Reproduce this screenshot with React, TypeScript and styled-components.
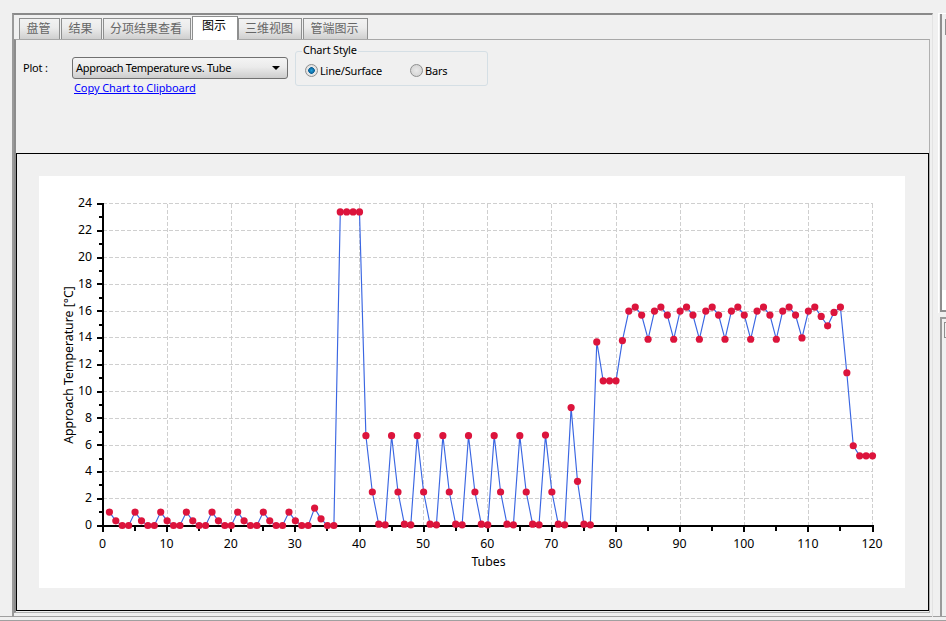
import React, { FC } from "react";
import styled, { createGlobalStyle } from "styled-components";

const GlobalStyle = createGlobalStyle`
  html, body {
    margin: 0;
    padding: 0;
    background: #f0f0f0;
  }
`;

const UI_FONT = `Tahoma, "Noto Sans", "Noto Sans CJK SC", sans-serif`;

const Page = styled.div`
  width: 946px;
  height: 621px;
  overflow: hidden;
  background: #f0f0f0;
  font-family: ${UI_FONT};
  font-size: 11px;
  color: #000;
`;

const Workspace = styled.div`
  display: flex;
  height: 616px;
  padding-left: 12px;
`;

const MainFrame = styled.div`
  width: 919px;
  height: 602px;
  margin-top: 13px;
  border-top: 2px solid #8a8a8a;
  border-left: 2px solid #9a9a9a;
  border-right: 1px solid #e3e3e3;
  display: flex;
  flex-direction: column;
`;

const TabBar = styled.div`
  display: flex;
  align-items: flex-end;
  height: 24px;
  padding-left: 5px;
`;

const Tab = styled.div<{ $active?: boolean; $width: number }>`
  box-sizing: border-box;
  width: ${(p) => p.$width}px;
  height: ${(p) => (p.$active ? 24 : 21)}px;
  margin-right: ${(p) => (p.$active ? 0 : 1)}px;
  margin-bottom: ${(p) => (p.$active ? -1 : 0)}px;
  padding-right: 2px;
  border: 1px solid #8e8f8f;
  border-bottom: none;
  background: ${(p) =>
    p.$active ? "#ffffff" : "linear-gradient(#f2f2f2, #ebebeb 45%, #cfcfcf)"};
  color: ${(p) => (p.$active ? "#000" : "#666")};
  font-size: 12px;
  line-height: ${(p) => (p.$active ? 17 : 19)}px;
  text-align: center;
  position: relative;
  z-index: ${(p) => (p.$active ? 1 : 0)};
`;

const TabPanel = styled.div`
  box-sizing: border-box;
  width: 916px;
  height: 574px;
  border-top: 1px solid #a8a8a8;
  border-left: 2px solid #8c8c8c;
  border-right: 1px solid #b0b0b0;
  border-bottom: 1px solid #b0b0b0;
  display: flex;
  flex-direction: column;
`;

const Toolbar = styled.div`
  display: flex;
  height: 113px;
  box-sizing: border-box;
  padding: 11px 0 0 7px;
`;

const PlotLabel = styled.div`
  width: 49px;
  padding-top: 10px;
  line-height: 13px;
  letter-spacing: -0.2px;
`;

const PlotColumn = styled.div`
  display: flex;
  flex-direction: column;
  width: 216px;
  padding-top: 6px;
`;

const Select = styled.div`
  box-sizing: border-box;
  height: 22px;
  border: 1px solid #707070;
  border-radius: 3px;
  background: linear-gradient(#f4f4f4, #ebebeb 45%, #cdcdcd);
  padding: 0 7px 0 3px;
  display: flex;
  align-items: center;
  justify-content: space-between;
  line-height: 20px;
  letter-spacing: -0.31px;
`;

const Caret = styled.span`
  width: 0;
  height: 0;
  border-left: 4px solid transparent;
  border-right: 4px solid transparent;
  border-top: 4px solid #000;
`;

const CopyLink = styled.a`
  margin: 2px 0 0 2px;
  color: #0000ff;
  text-decoration: underline;
  line-height: 14px;
  letter-spacing: -0.08px;
`;

const ChartStyleBox = styled.fieldset`
  box-sizing: border-box;
  width: 193px;
  height: 41px;
  margin: -6px 0 0 7px;
  padding: 0 0 0 9px;
  border: 1px solid #d5dfe5;
  border-radius: 3px;
  display: flex;
  align-items: center;
  min-inline-size: 0;
  letter-spacing: -0.2px;
`;

const BoxLegend = styled.legend`
  padding: 0 1px;
  margin-left: -3px;
  font-size: 11px;
  line-height: 13px;
  transform: translateY(-2px);
`;

const RadioRow = styled.div<{ $width: number }>`
  display: flex;
  align-items: center;
  flex: none;
  gap: 2px;
  width: ${(p) => p.$width}px;
  margin-top: -2px;
`;

const RadioMark = styled.span<{ $checked?: boolean }>`
  box-sizing: border-box;
  width: 13px;
  height: 13px;
  border-radius: 50%;
  border: 1px solid #8e8f8f;
  background: ${(p) =>
    p.$checked
      ? "radial-gradient(circle, #1fa1dc 0, #0b5f96 3px, #e6e6e6 3.6px, #ddd 100%)"
      : "radial-gradient(circle, #e9e9e9, #cfcfcf)"};
`;

const ChartPanel = styled.div`
  box-sizing: border-box;
  width: 913px;
  height: 458px;
  border: 1px solid #000;
  padding: 22px 22px 21px 22px;
`;

const ChartSheet = styled.div`
  width: 866px;
  height: 412px;
  background: #fff;
`;

const ChartSvg = styled.svg`
  display: block;
  font-family: ${UI_FONT};
  font-size: 12.3px;
`;

const SideColumn = styled.div`
  display: flex;
  flex-direction: column;
  width: 8px;
  margin-left: 5px;
  margin-top: 13px;
`;

const SideUpper = styled.div`
  box-sizing: border-box;
  height: 300px;
  border-top: 1px solid #fff;
  border-left: 1px solid #fff;
  padding: 0 0 0 1px;
`;

const SideUpperInner = styled.div`
  box-sizing: border-box;
  height: 298px;
  border-left: 2px solid #8e8e8e;
  border-bottom: 2px solid #8e8e8e;
  padding: 5px 0 0 3px;
  background: linear-gradient(#f0f0f0 276px, #fff 276px);
`;

const SideTab = styled.div`
  height: 14px;
  border: 1px solid #8e8e8e;
  border-right: none;
`;

const SideLower = styled.div`
  box-sizing: border-box;
  flex: 1;
  margin-top: 4px;
  margin-left: 2px;
  border-left: 2px solid #9a9a9a;
  border-top: 2px solid #9a9a9a;
  padding: 3px 0 0 2px;
`;

const BottomStrip = styled.div`
  height: 5px;
  border-top: 1px solid #a0a0a0;
  border-bottom: 1px solid #a0a0a0;
  box-sizing: border-box;
`;

const TABS = [
  { label: "盘管", width: 41 },
  { label: "结果", width: 41 },
  { label: "分项结果查看", width: 88 },
  { label: "图示", width: 46, active: true },
  { label: "三维视图", width: 64 },
  { label: "管端图示", width: 65 },
];

const X0 = 103;
const Y0 = 525.5;
const PX_PER_TUBE = 769.5 / 120;
const PX_PER_DEG = 321.6 / 24;

const sx = (v: number) => X0 + v * PX_PER_TUBE;
const sy = (v: number) => Y0 - v * PX_PER_DEG;

const repeat = (pattern: number[], times: number) =>
  Array.from({ length: times }).flatMap(() => pattern);

const DATA: number[] = [
  ...repeat([1.0, 0.35, 0, 0], 8),
  1.3, 0.5, 0, 0,
  23.4, 23.4, 23.4, 23.4,
  ...repeat([6.7, 2.5, 0.1, 0.05], 7),
  6.75, 2.5, 0.1, 0.05,
  8.8, 3.3, 0.1, 0.05,
  13.7, 10.8, 10.8, 10.8,
  13.8,
  ...repeat([16, 16.3, 15.7, 13.9], 6),
  16, 16.3, 15.7, 14.0,
  16, 16.3, 15.6, 14.9, 15.9, 16.3,
  11.4, 5.95, 5.2, 5.2, 5.2,
];

const X_MAJOR = Array.from({ length: 13 }, (_, i) => i * 10);
const X_MINOR = Array.from({ length: 12 }, (_, i) => i * 10 + 5);
const Y_MAJOR = Array.from({ length: 13 }, (_, i) => i * 2);
const Y_MINOR = Array.from({ length: 12 }, (_, i) => i * 2 + 1);

const Chart: FC = () => {
  const line = DATA.map((v, i) => `${sx(i + 1).toFixed(1)},${sy(v).toFixed(1)}`).join(" ");

  return (
    <ChartSvg width={866} height={412} viewBox="39 176 866 412">
      <g stroke="#cfcfcf" strokeDasharray="4 2" shapeRendering="crispEdges">
        {X_MAJOR.slice(1).map((v) => (
          <line key={v} x1={sx(v)} x2={sx(v)} y1={sy(24)} y2={Y0} />
        ))}
        {Y_MAJOR.slice(1).map((v) => (
          <line key={v} x1={X0} x2={sx(120)} y1={sy(v)} y2={sy(v)} />
        ))}
      </g>

      <polyline points={line} fill="none" stroke="#3a66e2" strokeWidth={1.15} />

      <g stroke="#000" shapeRendering="crispEdges">
        <line x1={X0} x2={X0} y1={sy(24) - 1} y2={Y0 + 1.5} strokeWidth={2} />
        <line x1={X0} x2={sx(120) + 1} y1={Y0 + 0.5} y2={Y0 + 0.5} strokeWidth={2} />
        {Y_MAJOR.map((v) => (
          <line key={v} x1={X0 - 6} x2={X0} y1={sy(v)} y2={sy(v)} strokeWidth={2} />
        ))}
        {Y_MINOR.map((v) => (
          <line key={v} x1={X0 - 4} x2={X0} y1={sy(v)} y2={sy(v)} strokeWidth={2} />
        ))}
        {X_MAJOR.map((v) => (
          <line key={v} x1={sx(v)} x2={sx(v)} y1={Y0} y2={Y0 + 6} strokeWidth={2} />
        ))}
        {X_MINOR.map((v) => (
          <line key={v} x1={sx(v)} x2={sx(v)} y1={Y0} y2={Y0 + 5} strokeWidth={2} />
        ))}
      </g>

      <g fill="#dc143c">
        {DATA.map((v, i) => (
          <circle key={i} cx={sx(i + 1)} cy={sy(v)} r={3.6} />
        ))}
      </g>

      <g textAnchor="end">
        {Y_MAJOR.map((v) => (
          <text key={v} x={92} y={sy(v) + 3.5}>
            {v}
          </text>
        ))}
      </g>
      <g textAnchor="middle">
        {X_MAJOR.map((v) => (
          <text key={v} x={sx(v) - 0.5} y={548}>
            {v}
          </text>
        ))}
        <text x={488.5} y={566}>
          Tubes
        </text>
        <text transform="translate(73 365) rotate(-90)">Approach Temperature [°C]</text>
      </g>
    </ChartSvg>
  );
};

const App: FC = () => {
  return (
    <Page>
      <GlobalStyle />
      <Workspace>
        <MainFrame>
          <TabBar>
            {TABS.map((tab) => (
              <Tab key={tab.label} $active={tab.active} $width={tab.width}>
                {tab.label}
              </Tab>
            ))}
          </TabBar>
          <TabPanel>
            <Toolbar>
              <PlotLabel>Plot :</PlotLabel>
              <PlotColumn>
                <Select>
                  Approach Temperature vs. Tube
                  <Caret />
                </Select>
                <CopyLink href="#copy">Copy Chart to Clipboard</CopyLink>
              </PlotColumn>
              <ChartStyleBox>
                <BoxLegend>Chart Style</BoxLegend>
                <RadioRow $width={105}>
                  <RadioMark $checked />
                  Line/Surface
                </RadioRow>
                <RadioRow $width={60}>
                  <RadioMark />
                  Bars
                </RadioRow>
              </ChartStyleBox>
            </Toolbar>
            <ChartPanel>
              <ChartSheet>
                <Chart />
              </ChartSheet>
            </ChartPanel>
          </TabPanel>
        </MainFrame>
        <SideColumn>
          <SideUpper>
            <SideUpperInner>
              <SideTab />
            </SideUpperInner>
          </SideUpper>
          <SideLower>
            <SideTab />
          </SideLower>
        </SideColumn>
      </Workspace>
      <BottomStrip />
    </Page>
  );
};

export default App;
